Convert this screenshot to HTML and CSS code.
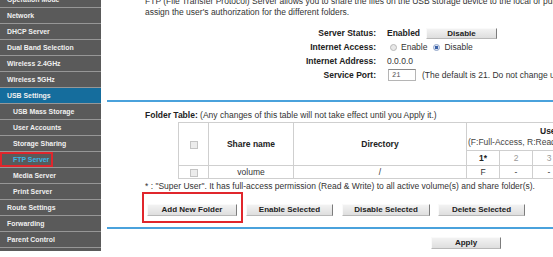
FILE: index.html
```html
<!DOCTYPE html>
<html>
<head>
<link rel="stylesheet" href="styles.css">
</head>
<body>
<div class="page">

  <div class="menu">
    <div class="item">Operation Mode</div>
    <div class="item">Network</div>
    <div class="item">DHCP Server</div>
    <div class="item">Dual Band Selection</div>
    <div class="item">Wireless 2.4GHz</div>
    <div class="item">Wireless 5GHz</div>
    <div class="item open">USB Settings</div>
    <div class="item sub">USB Mass Storage</div>
    <div class="item sub">User Accounts</div>
    <div class="item sub">Storage Sharing</div>
    <div class="item sub current"><span class="flag"></span>FTP Server</div>
    <div class="item sub">Media Server</div>
    <div class="item sub">Print Server</div>
    <div class="item">Route Settings</div>
    <div class="item">Forwarding</div>
    <div class="item">Parent Control</div>
  </div>

  <div class="content">
    <p class="intro">FTP (File Transfer Protocol) Server allows you to share the files on the USB storage device to the local or public network, and<br>assign the user's authorization for the different folders.</p>

    <div class="settings">
      <div class="label">Server Status:</div>
      <div class="value"><b>Enabled</b><button class="btn small">Disable</button></div>
      <div class="label">Internet Access:</div>
      <div class="value"><span class="radio"></span>Enable<span class="radio on"></span>Disable</div>
      <div class="label">Internet Address:</div>
      <div class="value">0.0.0.0</div>
      <div class="label">Service Port:</div>
      <div class="value"><span class="port">21</span><span class="hint">(The default is 21. Do not change unless necessary.)</span></div>
    </div>

    <div class="rule"></div>

    <p class="caption"><b>Folder Table:</b> (Any changes of this table will not take effect until you Apply it.)</p>

    <table class="folders">
      <colgroup>
        <col class="c-check">
        <col class="c-name">
        <col class="c-dir">
        <col class="c-user">
        <col class="c-user">
        <col class="c-user">
        <col class="c-user">
        <col class="c-user">
      </colgroup>
      <tr class="head">
        <th rowspan="2"><span class="check"></span></th>
        <th rowspan="2">Share name</th>
        <th rowspan="2">Directory</th>
        <th colspan="5" class="user"><span class="who">User</span><br>(F:Full-Access, R:Read-Only, -:No Access)</th>
      </tr>
      <tr class="nums">
        <th>1*</th>
        <td>2</td>
        <td>3</td>
        <td>4</td>
        <td>5</td>
      </tr>
      <tr class="data">
        <td><span class="check"></span></td>
        <td>volume</td>
        <td>/</td>
        <td>F</td>
        <td>-</td>
        <td>-</td>
        <td>-</td>
        <td>-</td>
      </tr>
    </table>

    <p class="note">* : "Super User". It has full-access permission (Read &amp; Write) to all active volume(s) and share folder(s).</p>

    <div class="actions">
      <span class="boxed"><span class="flag"></span><button class="btn add">Add New Folder</button></span>
      <button class="btn enable">Enable Selected</button>
      <button class="btn disable">Disable Selected</button>
      <button class="btn delete">Delete Selected</button>
    </div>

    <div class="rule second"></div>

    <div class="apply-row">
      <button class="btn apply">Apply</button>
    </div>
  </div>

</div>
</body>
</html>
```

FILE: styles.css
```css
html, body {
  margin: 0;
  overflow: hidden;
  background: white;
}

body {
  font-family: "Liberation Sans", Arial, sans-serif;
  font-size: 8.5px;
  color: #333;
}

.page {
  display: flex;
  margin-top: -8px;
}

/* left menu */

.menu {
  width: 101px;
  flex: none;
  background-color: #5a5a5a;
  padding-bottom: 3px;
  align-self: flex-start;
}

.item {
  position: relative;
  height: 15px;
  line-height: 16px;
  border-bottom: 1px solid #979797;
  padding-left: 7px;
  font-size: 6.9px;
  font-weight: bold;
  color: #f0f0f0;
  white-space: nowrap;
}

.item.sub {
  padding-left: 13px;
}

.item.open {
  background-color: #156d9d;
}

.item.current {
  color: #3cb6e6;
}

.item.current .flag {
  position: absolute;
  left: 0;
  top: 0;
  width: 49px;
  height: 11px;
  border: 2px solid #e0262c;
}

/* content */

.content {
  flex: 1;
  min-width: 0;
  padding-left: 6px;
  white-space: nowrap;
}

.intro {
  margin: 0;
  padding: 4px 0 0 38px;
  line-height: 11px;
}

.settings {
  display: grid;
  grid-template-columns: 269px auto;
  grid-auto-rows: 14px;
  column-gap: 11px;
  align-items: center;
  margin-top: 8px;
}

.label {
  text-align: right;
  font-weight: bold;
  color: #222;
}

.value {
  display: flex;
  align-items: center;
}

.value b {
  color: #222;
  width: 39px;
}

.radio {
  width: 5px;
  height: 5px;
  border-radius: 50%;
  border: 1px solid #b8b8b8;
  background: #e8e8e8;
  margin: 0 4px 0 3px;
}

.radio.on {
  margin-left: 6px;
  background: radial-gradient(circle, #3b62a8 45%, #dfe6f2 55%);
  border-color: #8ea3c8;
}

.port {
  box-sizing: border-box;
  width: 28px;
  height: 12px;
  margin-left: 1px;
  padding-left: 3px;
  border: 1px solid #b5b5b5;
  border-top-color: #8a8a8a;
  font-family: "Liberation Mono", monospace;
  font-size: 7px;
  line-height: 10px;
  color: #555;
}

.hint {
  margin-left: 6px;
}

.rule {
  height: 2px;
  background-color: #4aa2dc;
  margin-top: 18px;
}

.caption {
  margin: 8px 0 0 38px;
  line-height: 10px;
}

.caption b {
  color: #222;
}

.folders {
  margin: 2px 0 0 71px;
  border-collapse: collapse;
  table-layout: fixed;
  width: 454px;
  font-size: 8.5px;
}

.c-check { width: 30px; }
.c-name { width: 85px; }
.c-dir { width: 173px; }
.c-user { width: 33px; }

.folders th, .folders td {
  border: 1px solid #cfcfcf;
  text-align: center;
  padding: 0;
  line-height: 10px;
}

.folders th {
  color: #222;
}

.folders .head th {
  height: 27px;
}

.folders .head th.user {
  text-align: left;
  font-weight: normal;
  color: #444;
  padding-left: 1px;
  line-height: 11px;
  white-space: nowrap;
  overflow: hidden;
}

.who {
  display: inline-block;
  margin-left: 72px;
  font-weight: bold;
  color: #222;
}

.folders .nums th, .folders .nums td {
  height: 14px;
}

.folders .nums td {
  color: #999;
}

.folders .data td {
  height: 12px;
}

.check {
  display: inline-block;
  width: 6px;
  height: 6px;
  border: 1px solid #c4c4c4;
  background: #ececec;
  vertical-align: middle;
}

.note {
  margin: 2px 0 0 38px;
  line-height: 10px;
}

.actions {
  display: flex;
  margin: 13px 0 0 40px;
}

.boxed {
  position: relative;
  display: flex;
}

.boxed .flag {
  position: absolute;
  left: -5px;
  top: -12px;
  right: -6px;
  bottom: -7px;
  border: 2px solid #e0262c;
}

.btn {
  font-family: "Liberation Sans", Arial, sans-serif;
  font-size: 8px;
  font-weight: bold;
  color: #222;
  height: 12px;
  line-height: 10px;
  padding: 0;
  background: linear-gradient(#f2f2f2, #dedede);
  border: 1px solid;
  border-color: #fafafa #7c7c7c #b8b8b8 #fafafa;
  border-radius: 0;
}

.btn.small {
  width: 71px;
  height: 11px;
}

.btn.add {
  width: 90px;
}

.btn.enable {
  width: 87px;
  margin-left: 9px;
}

.btn.disable {
  width: 88px;
  margin-left: 9px;
}

.btn.delete {
  width: 87px;
  margin-left: 8px;
}

.rule.second {
  margin-top: 11px;
}

.apply-row {
  margin: 8px 0 0 324px;
}

.btn.apply {
  width: 70px;
}
```
